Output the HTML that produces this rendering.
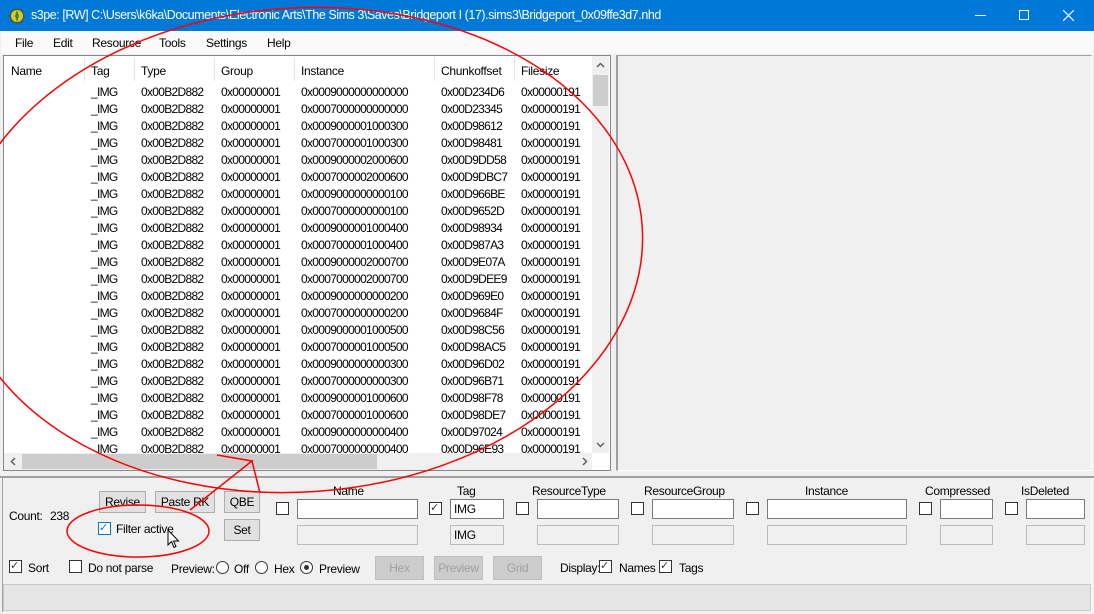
<!DOCTYPE html>
<html><head><meta charset="utf-8"><style>
*{margin:0;padding:0;box-sizing:border-box}
body{width:1094px;height:614px;overflow:hidden;background:#f0f0f0;font-family:"Liberation Sans",sans-serif;font-size:12px;letter-spacing:-0.3px;color:#000;position:relative}
.a{position:absolute;white-space:nowrap}
.tb{left:0;top:0;width:1094px;height:31px;background:#0078d7;color:#fff;font-size:12.5px;letter-spacing:-0.45px}
.menu{left:1px;top:31px;width:1092px;height:23px;background:#fafafa}
.lb{left:3px;top:55px;width:608px;height:416px;background:#fff;border:1px solid #828790}
.rp{left:616px;top:55px;width:476px;height:416px;border-left:2px solid #a0a0a0;border-top:1px solid #a0a0a0;border-right:1px solid #fff;border-bottom:1px solid #fff}
.hdr span{position:absolute;top:8px}
.sep{position:absolute;top:1px;width:1px;height:24px;background:#e5e5e5}
.row span{position:absolute;letter-spacing:-0.7px}
.btn{background:#e1e1e1;border:1px solid #adadad;text-align:center;line-height:20px;height:22px}
.dis{background:#cccccc;border:1px solid #bfbfbf;color:#a0a0a0;text-align:center;line-height:22px;height:24px}
.cb{width:13px;height:13px;border:1px solid #333;background:#fff}
.tx{height:20px;border:1px solid #7a7a7a;background:#fff;padding-left:3px;line-height:18px}
.tx2{height:20px;border:1px solid #bcbcbc;background:#f0f0f0;padding-left:3px;line-height:18px}
.rb{width:13px;height:13px;border:1px solid #333;border-radius:50%;background:#fff}
.ck{font-size:11px;line-height:11px;text-align:center;color:#333}
</style></head><body>
<div class="a tb">
  <svg class="a" style="left:9px;top:8px" width="16" height="16" viewBox="0 0 16 16"><circle cx="8" cy="8" r="7.5" fill="#4a5a20"/><circle cx="8" cy="8" r="6" fill="#d8c840"/><path d="M8 2 L10 8 L8 14 L6 8Z" fill="#3a8a20"/></svg>
  <span class="a" style="left:31px;top:8px">s3pe: [RW] C:\Users\k6ka\Documents\Electronic Arts\The Sims 3\Saves\Bridgeport I (17).sims3\Bridgeport_0x09ffe3d7.nhd</span>
  <div class="a" style="left:975px;top:15px;width:11px;height:1px;background:#fff"></div>
  <div class="a" style="left:1019px;top:10px;width:10px;height:10px;border:1px solid #fff"></div>
  <svg class="a" style="left:1063px;top:10px" width="11" height="11"><path d="M0 0L11 11M11 0L0 11" stroke="#fff" stroke-width="1.2"/></svg>
</div>
<div class="a menu">
  <span class="a" style="left:14px;top:5px">File</span>
  <span class="a" style="left:52px;top:5px">Edit</span>
  <span class="a" style="left:91px;top:5px">Resource</span>
  <span class="a" style="left:158px;top:5px">Tools</span>
  <span class="a" style="left:205px;top:5px">Settings</span>
  <span class="a" style="left:266px;top:5px">Help</span>
</div>
<div class="a lb">
  <div class="hdr">
    <span style="left:7px">Name</span><span style="left:87px">Tag</span><span style="left:137px">Type</span><span style="left:217px">Group</span><span style="left:297px">Instance</span><span style="left:437px">Chunkoffset</span><span style="left:517px">Filesize</span>
    <div class="sep" style="left:80px"></div><div class="sep" style="left:130px"></div><div class="sep" style="left:210px"></div><div class="sep" style="left:290px"></div><div class="sep" style="left:430px"></div><div class="sep" style="left:510px"></div>
  </div>
  <div id="rows"></div>
  <div class="a" style="left:588px;top:0;width:17px;height:397px;background:#f0f0f0"></div>
  <div class="a" style="left:589px;top:19px;width:15px;height:31px;background:#cdcdcd"></div>
  <svg class="a" style="left:592px;top:6px" width="9" height="6"><path d="M1 5L4.5 1.5L8 5" stroke="#606060" stroke-width="1.5" fill="none"/></svg>
  <svg class="a" style="left:592px;top:386px" width="9" height="6"><path d="M1 1L4.5 4.5L8 1" stroke="#606060" stroke-width="1.5" fill="none"/></svg>
  <div class="a" style="left:0;top:397px;width:588px;height:17px;background:#f0f0f0"></div>
  <div class="a" style="left:18px;top:398px;width:355px;height:15px;background:#cdcdcd"></div>
  <svg class="a" style="left:6px;top:401px" width="6" height="9"><path d="M5 1L1.5 4.5L5 8" stroke="#606060" stroke-width="1.5" fill="none"/></svg>
  <svg class="a" style="left:578px;top:401px" width="6" height="9"><path d="M1 1L4.5 4.5L1 8" stroke="#606060" stroke-width="1.5" fill="none"/></svg>
</div>
<div class="a rp"></div>
<div class="a" style="left:0;top:476px;width:1094px;height:2px;background:#a0a0a0"></div>
<div class="a" style="left:2px;top:478px;width:1090px;height:134px;border-left:1px solid #a0a0a0;border-right:1px solid #fff"></div>

<span class="a" style="left:9px;top:509px">Count:</span><span class="a" style="left:50px;top:509px">238</span>
<div class="a btn" style="left:99px;top:491px;width:47px">Revise</div>
<div class="a btn" style="left:155px;top:491px;width:60px">Paste RK</div>
<div class="a btn" style="left:224px;top:491px;width:36px">QBE</div>
<div class="a btn" style="left:224px;top:519px;width:36px">Set</div>
<div class="a cb" style="left:98px;top:522px;border-color:#0078d7"></div><span class="a ck" style="left:99px;top:523px;color:#0078d7">✓</span>
<span class="a" style="left:116px;top:522px">Filter active</span>
<svg class="a" style="left:167px;top:529px" width="14" height="20" viewBox="0 0 14 20"><path d="M1 1 L1 16 L4.5 12.5 L7 18.5 L9 17.5 L6.5 12 L11.5 12 Z" fill="#fff" stroke="#000" stroke-width="1"/></svg>

<span class="a" style="left:333px;top:484px">Name</span>
<span class="a" style="left:457px;top:484px">Tag</span>
<span class="a" style="left:532px;top:484px">ResourceType</span>
<span class="a" style="left:644px;top:484px">ResourceGroup</span>
<span class="a" style="left:805px;top:484px">Instance</span>
<span class="a" style="left:925px;top:484px">Compressed</span>
<span class="a" style="left:1021px;top:484px">IsDeleted</span>

<div class="a cb" style="left:276px;top:502px"></div>
<div class="a tx" style="left:297px;top:499px;width:121px"></div>
<div class="a tx2" style="left:297px;top:525px;width:121px"></div>
<div class="a cb" style="left:429px;top:502px"></div><span class="a ck" style="left:430px;top:503px">✓</span>
<div class="a tx" style="left:450px;top:499px;width:54px">IMG</div>
<div class="a tx2" style="left:450px;top:525px;width:54px">IMG</div>
<div class="a cb" style="left:516px;top:502px"></div>
<div class="a tx" style="left:537px;top:499px;width:82px"></div>
<div class="a tx2" style="left:537px;top:525px;width:82px"></div>
<div class="a cb" style="left:631px;top:502px"></div>
<div class="a tx" style="left:652px;top:499px;width:82px"></div>
<div class="a tx2" style="left:652px;top:525px;width:82px"></div>
<div class="a cb" style="left:746px;top:502px"></div>
<div class="a tx" style="left:767px;top:499px;width:140px"></div>
<div class="a tx2" style="left:767px;top:525px;width:140px"></div>
<div class="a cb" style="left:919px;top:502px"></div>
<div class="a tx" style="left:940px;top:499px;width:53px"></div>
<div class="a tx2" style="left:940px;top:525px;width:53px"></div>
<div class="a cb" style="left:1005px;top:502px"></div>
<div class="a tx" style="left:1026px;top:499px;width:59px"></div>
<div class="a tx2" style="left:1026px;top:525px;width:59px"></div>

<div class="a cb" style="left:9px;top:560px"></div><span class="a ck" style="left:10px;top:561px">✓</span>
<span class="a" style="left:28px;top:561px">Sort</span>
<div class="a cb" style="left:69px;top:560px"></div>
<span class="a" style="left:88px;top:561px">Do not parse</span>
<span class="a" style="left:171px;top:562px">Preview:</span>
<div class="a rb" style="left:216px;top:561px"></div><span class="a" style="left:234px;top:562px">Off</span>
<div class="a rb" style="left:255px;top:561px"></div><span class="a" style="left:274px;top:562px">Hex</span>
<div class="a rb" style="left:300px;top:561px"></div><div class="a" style="left:304px;top:565px;width:5px;height:5px;border-radius:50%;background:#333"></div><span class="a" style="left:319px;top:562px">Preview</span>
<div class="a dis" style="left:375px;top:556px;width:49px">Hex</div>
<div class="a dis" style="left:434px;top:556px;width:49px">Preview</div>
<div class="a dis" style="left:493px;top:556px;width:49px">Grid</div>
<span class="a" style="left:560px;top:561px">Display:</span>
<div class="a cb" style="left:599px;top:560px"></div><span class="a ck" style="left:600px;top:561px">✓</span>
<span class="a" style="left:619px;top:561px">Names</span>
<div class="a cb" style="left:659px;top:560px"></div><span class="a ck" style="left:660px;top:561px">✓</span>
<span class="a" style="left:679px;top:561px">Tags</span>

<div class="a" style="left:3px;top:584px;width:1088px;height:27px;background:#e6e6e6;border:1px solid #c8c8c8"></div>

<svg class="a" style="left:0;top:0" width="1094" height="614">
  <ellipse cx="300" cy="250" rx="343" ry="242" transform="rotate(-4 300 250)" fill="none" stroke="#f00" stroke-width="1.5"/>
  <ellipse cx="138" cy="531" rx="71" ry="26" fill="none" stroke="#f00" stroke-width="1.5"/>
  <polyline points="217,455 252,461 190,510" fill="none" stroke="#f00" stroke-width="1.5"/>
  <line x1="252" y1="461" x2="260" y2="493" stroke="#f00" stroke-width="1.5"/>
</svg>

<script>
var d=[["0x0009000000000000","0x00D234D6"],["0x0007000000000000","0x00D23345"],["0x0009000001000300","0x00D98612"],["0x0007000001000300","0x00D98481"],["0x0009000002000600","0x00D9DD58"],["0x0007000002000600","0x00D9DBC7"],["0x0009000000000100","0x00D966BE"],["0x0007000000000100","0x00D9652D"],["0x0009000001000400","0x00D98934"],["0x0007000001000400","0x00D987A3"],["0x0009000002000700","0x00D9E07A"],["0x0007000002000700","0x00D9DEE9"],["0x0009000000000200","0x00D969E0"],["0x0007000000000200","0x00D9684F"],["0x0009000001000500","0x00D98C56"],["0x0007000001000500","0x00D98AC5"],["0x0009000000000300","0x00D96D02"],["0x0007000000000300","0x00D96B71"],["0x0009000001000600","0x00D98F78"],["0x0007000001000600","0x00D98DE7"],["0x0009000000000400","0x00D97024"],["0x0007000000000400","0x00D96E93"]];
var h="";d.forEach(function(r,i){var t=29+i*17;h+='<div class="row"><span style="left:87px;top:'+t+'px">_IMG</span><span style="left:137px;top:'+t+'px">0x00B2D882</span><span style="left:217px;top:'+t+'px">0x00000001</span><span style="left:297px;top:'+t+'px">'+r[0]+'</span><span style="left:437px;top:'+t+'px">'+r[1]+'</span><span style="left:517px;top:'+t+'px">0x00000191</span></div>';});
document.getElementById("rows").innerHTML=h;
</script>
</body></html>
